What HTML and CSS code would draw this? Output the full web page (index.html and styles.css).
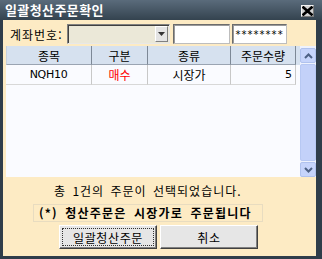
FILE: index.html
```html
<!DOCTYPE html>
<html lang="ko">
<head>
<meta charset="utf-8">
<link rel="stylesheet" href="styles.css">
</head>
<body>
<div class="window">
  <div class="titlebar">
    <span class="title">일괄청산주문확인</span>
    <span class="close">
      <svg width="11" height="10" viewBox="0 0 11 10"><path d="M1.5 1.5 L9.5 8.5 M9.5 1.5 L1.5 8.5" stroke="#000" stroke-width="2.6" stroke-linecap="square"/></svg>
    </span>
  </div>
  <div class="content">
    <div class="acct">
      <span class="label">계좌번호:</span>
      <span class="combo"><span class="combo-btn"><svg width="7" height="4" viewBox="0 0 7 4"><path d="M0 0 H7 L3.5 4 Z" fill="#333"/></svg></span></span>
      <span class="field name"></span>
      <span class="field pw">********</span>
    </div>
    <div class="grid">
      <div class="table">
        <div class="row head">
          <span class="c1">종목</span><span class="c2">구분</span><span class="c3">종류</span><span class="c4">주문수량</span>
        </div>
        <div class="row data">
          <span class="c1">NQH10</span><span class="c2 red">매수</span><span class="c3">시장가</span><span class="c4 num">5</span>
        </div>
      </div>
      <div class="scroll">
        <span class="sbtn"><svg width="9" height="6" viewBox="0 0 9 6"><path d="M1 5 L4.5 1.5 L8 5" fill="none" stroke="#4d6185" stroke-width="2"/></svg></span>
        <span class="track"></span>
        <span class="sbtn"><svg width="9" height="6" viewBox="0 0 9 6"><path d="M1 1 L4.5 4.5 L8 1" fill="none" stroke="#4d6185" stroke-width="2"/></svg></span>
      </div>
    </div>
    <div class="msg">총 1건의 주문이 선택되었습니다.</div>
    <div class="notice">(*) 청산주문은 시장가로 주문됩니다</div>
    <div class="buttons">
      <span class="btn focus"><span class="inner">일괄청산주문</span></span>
      <span class="btn"><span class="inner">취소</span></span>
    </div>
  </div>
</div>
</body>
</html>
```
FILE: styles.css
```css
* { box-sizing: border-box; }
html, body { margin: 0; padding: 0; }
body {
  width: 322px; height: 259px; overflow: hidden;
  font-family: "Noto Sans CJK KR", "Noto Sans", sans-serif;
  font-size: 12px; color: #000;
}
.window {
  width: 322px; height: 259px;
  display: flex; flex-direction: column;
  background: #2f3d4a;
}
.titlebar {
  height: 20px;
  display: flex; align-items: center; justify-content: space-between;
  padding: 0 8px 0 5px;
  background: linear-gradient(#5a6b7b, #34434f);
}
.title {
  color: #fff; font-weight: bold; font-size: 13px; letter-spacing: 0.4px;
  line-height: 20px;
}
.close {
  width: 13px; height: 12px; margin-top: 2px;
  background: #d2d2d2;
  border: 1px solid; border-color: #f4f4f4 #7a7a7a #7a7a7a #f4f4f4;
  display: flex; align-items: center; justify-content: center;
}
.close svg { display: block; }
.content {
  flex: 1;
  margin: 0 6px 3px 3px;
  background: #fdebc4;
  display: flex; flex-direction: column;
}
.acct {
  display: flex; align-items: center;
  height: 20px; margin-top: 4px;
}
.label { width: 64px; padding-left: 7px; font-size: 12px; letter-spacing: 1px; }
.combo {
  width: 103px; height: 20px;
  background: #ebe8d8;
  border: 1px solid; border-color: #808080 #e8e8e8 #e8e8e8 #808080;
  box-shadow: inset 1px 1px 0 #404040;
  display: flex; justify-content: flex-end; align-items: center; padding-right: 1px;
}
.combo-btn {
  width: 13px; height: 16px;
  background: #e4e4e4;
  border: 1px solid; border-color: #fff #808080 #808080 #fff;
  display: flex; align-items: center; justify-content: center;
}
.combo-btn svg { display: block; }
.field {
  height: 20px; background: #fff;
  border: 1px solid; border-color: #6c6c6c #bdbdbd #bdbdbd #6c6c6c;
  box-shadow: inset 1px 1px 0 #9a9a9a;
}
.name { width: 57px; margin-left: 3px; }
.pw {
  width: 55px; margin-left: 2px;
  font-family: "DejaVu Sans Mono", monospace; font-size: 10px; line-height: 19px;
  padding-left: 2px; letter-spacing: 0;
  overflow: hidden; white-space: nowrap;
}
.grid {
  display: flex; height: 131px; margin: 2px 0 0 3px;
}
.table { flex: 1; background: #fafbff; }
.row { display: flex; height: 19px; line-height: 19px; }
.row span { text-align: center; }
.c1 { width: 86px; }
.c2 { width: 56px; }
.c3 { width: 83px; }
.c4 { width: 65px; }
.head { background: #d6e1ef; }
.head span { border-right: 1px solid #7d8896; border-bottom: 1px solid #9aa4b2; }
.head span:first-child { border-left: 1px solid #c7d1de; }
.data { height: 20px; line-height: 20px; }
.data span { border-right: 1px solid #c8c8c8; border-bottom: 1px solid #d8d8d8; }
.data .c1 { font-family: "DejaVu Sans", sans-serif; font-size: 11px; letter-spacing: -0.3px; }
.data .num { text-align: right; padding-right: 3px; font-family: "DejaVu Sans", sans-serif; font-size: 11px; }
.red { color: #ff0000; }
.scroll {
  width: 16px; background: #eef2fd;
  display: flex; flex-direction: column; padding-top: 2px;
}
.sbtn {
  height: 15px; width: 16px;
  background: #c6d4fb; border: 1px solid #b0c2ee; border-radius: 2px;
  display: flex; align-items: center; justify-content: center;
}
.sbtn svg { display: block; }
.track { flex: 1; background: #c3d1f9; border: 1px solid #b7c8f3; border-radius: 2px; margin: 1px 0; }
.msg {
  margin-top: 4px; height: 20px; line-height: 20px;
  padding-left: 51px; letter-spacing: 1px; word-spacing: 2px;
}
.notice {
  margin: 3px 0 0 30px; width: 230px; height: 18px;
  border: 1px solid #e8dcc0;
  font-weight: bold; line-height: 16px; padding-left: 5px;
  letter-spacing: 1.2px; word-spacing: 3px;
}
.buttons {
  display: flex; gap: 3px; margin: 3px 0 0 56px;
}
.btn {
  width: 98px; height: 24px;
  background: #e6e6e6;
  border: 1px solid; border-color: #ffffff #404040 #404040 #ffffff;
  box-shadow: inset -1px -1px 0 #808080;
  display: flex; padding: 2px;
}
.btn .inner {
  flex: 1; display: flex; align-items: center; justify-content: center;
  font-size: 12px; letter-spacing: 0.6px; border: 1px dotted transparent;
}
.btn.focus .inner { border-color: #333; }
```
